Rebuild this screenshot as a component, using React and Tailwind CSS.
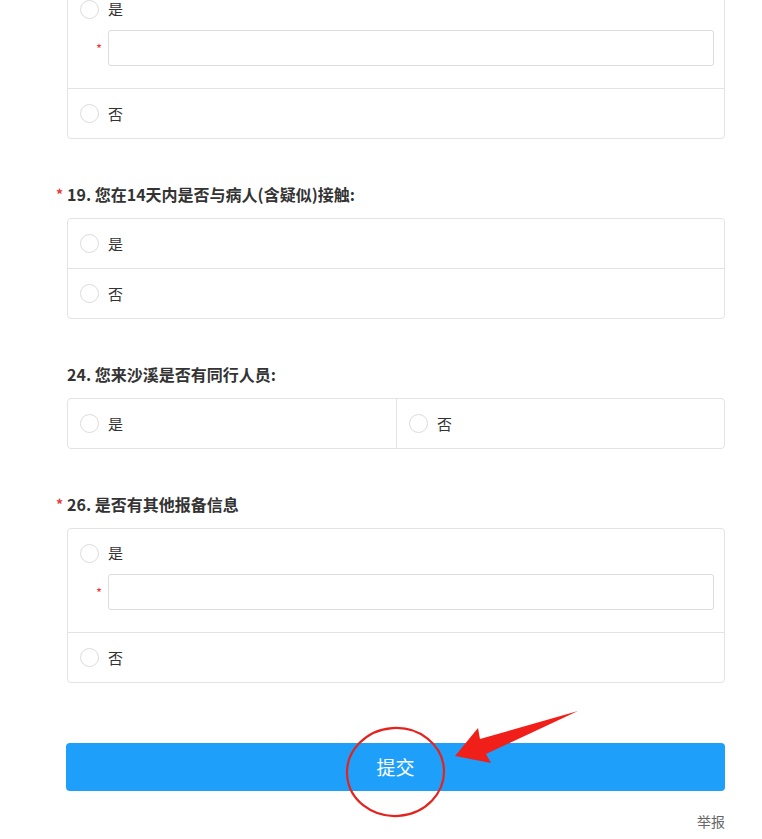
import React from "react";

const font = "font-['Noto_Sans_CJK_SC','Noto_Sans',sans-serif]";

function Radio({ label }) {
  return (
    <div className="flex h-[22px] items-center">
      <span className="h-[19px] w-[19px] shrink-0 rounded-full border border-[#dcdcdc] bg-white" />
      <span className="ml-[9px] text-[15px] leading-[22px] text-[#333]">{label}</span>
    </div>
  );
}

function OptionWithInput({ label }) {
  return (
    <div className="pb-[22px] pl-[12px] pr-[10px] pt-[13px]">
      <Radio label={label} />
      <div className="mt-[10px] flex items-center">
        <span className="w-[28px] pr-[6px] text-right text-[13px] leading-none text-[#e4393c]">*</span>
        <div className="h-[36px] flex-1 rounded-[3px] border border-[#dcdcdc] bg-white" />
      </div>
    </div>
  );
}

function Option({ label, className = "" }) {
  return (
    <div className={`flex items-center px-[12px] ${className}`}>
      <Radio label={label} />
    </div>
  );
}

function Title({ num, text, required }) {
  return (
    <div className="mb-[12px] mt-[43px] flex h-[24px] items-center text-[16px] font-bold leading-[24px] text-[#333]">
      {required && (
        <span className="-ml-[11px] w-[11px] text-[14px] font-bold text-[#e4393c]">*</span>
      )}
      <span>
        {num}. {text}
      </span>
    </div>
  );
}

export default function App() {
  return (
    <div className={`relative h-[839px] w-[762px] overflow-hidden bg-white ${font}`}>
      <div className="-mt-[16px] ml-[67px] w-[658px]">
        <div className="rounded-[4px] border border-[#e3e3e3]">
          <OptionWithInput label="是" />
          <Option label="否" className="h-[50px] border-t border-[#e3e3e3]" />
        </div>

        <Title num="19" text="您在14天内是否与病人(含疑似)接触:" required />
        <div className="rounded-[4px] border border-[#e3e3e3]">
          <Option label="是" className="h-[49px]" />
          <Option label="否" className="h-[50px] border-t border-[#e3e3e3]" />
        </div>

        <Title num="24" text="您来沙溪是否有同行人员:" />
        <div className="grid grid-cols-2 rounded-[4px] border border-[#e3e3e3]">
          <Option label="是" className="h-[49px]" />
          <Option label="否" className="h-[49px] border-l border-[#e3e3e3]" />
        </div>

        <Title num="26" text="是否有其他报备信息" required />
        <div className="rounded-[4px] border border-[#e3e3e3]">
          <OptionWithInput label="是" />
          <Option label="否" className="h-[50px] border-t border-[#e3e3e3]" />
        </div>

        <button className="mt-[60px] flex h-[48px] w-[659px] -ml-[1px] items-center justify-center rounded-[4px] bg-[#1ea0fa] text-[19px] text-white">
          提交
        </button>

        <div className="mt-[20px] text-right text-[14px] leading-[20px] text-[#666]">举报</div>
      </div>

      {/* red markup drawn over the button */}
      <svg className="pointer-events-none absolute left-0 top-0" width="762" height="839" viewBox="0 0 762 839">
        <ellipse cx="395.5" cy="772" rx="48.5" ry="44" fill="none" stroke="#e5231d" strokeWidth="2.2" transform="rotate(-4 395.5 772)" />
        <polygon
          points="455,756 478,728 480,739 578,711 486,754 491,763"
          fill="#f01f19"
        />
      </svg>
    </div>
  );
}
